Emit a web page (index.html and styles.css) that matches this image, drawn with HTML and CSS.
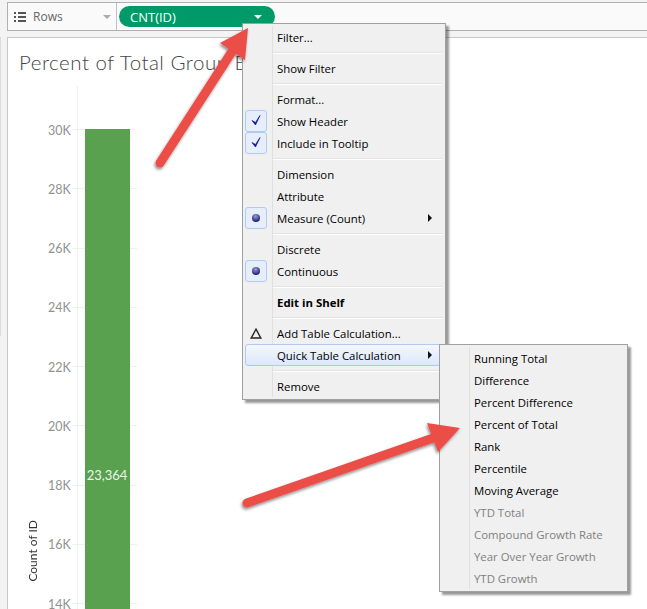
FILE: index.html
```html
<!DOCTYPE html>
<html lang="en">
<head>
    <meta charset="UTF-8">
    <meta name="viewport" content="width=device-width, initial-scale=1.0">
    <title>Percent of Total</title>
    <link rel="stylesheet" href="styles.css">
</head>
<body>

<!-- Rows shelf -->
<div class="shelf">
    <div class="shelf_label">
        <svg class="rows_icon" width="12" height="10" viewBox="0 0 12 10">
            <path d="M0 0h2v2H0zM4 0h8v2H4zM0 4h2v2H0zM4 4h8v2H4zM0 8h2v2H0zM4 8h8v2H4z" fill="#555"/>
        </svg>
        <span class="shelf_name">Rows</span>
        <span class="shelf_caret"></span>
    </div>
    <div class="pill">
        <span>CNT(ID)</span>
        <span class="pill_caret"></span>
    </div>
</div>

<!-- Chart pane -->
<div class="pane">
    <h1 class="title">Percent of Total Group By</h1>
    <div class="chart">
        <div class="axis_title"><span>Count of ID</span></div>
        <div class="plot">
            <div class="tick"><span class="tick_label">30K</span><span class="tick_line"></span></div>
            <div class="tick"><span class="tick_label">28K</span><span class="tick_line"></span></div>
            <div class="tick"><span class="tick_label">26K</span><span class="tick_line"></span></div>
            <div class="tick"><span class="tick_label">24K</span><span class="tick_line"></span></div>
            <div class="tick"><span class="tick_label">22K</span><span class="tick_line"></span></div>
            <div class="tick"><span class="tick_label">20K</span><span class="tick_line"></span></div>
            <div class="tick"><span class="tick_label">18K</span><span class="tick_line"></span></div>
            <div class="tick"><span class="tick_label">16K</span><span class="tick_line"></span></div>
            <div class="tick"><span class="tick_label">14K</span><span class="tick_line"></span></div>
            <div class="axis_line"></div>
            <div class="bar"><span class="bar_value">23,364</span></div>
        </div>
    </div>
</div>

<!-- Context menu -->
<div class="menu main_menu">
    <div class="item"><span class="gutter"></span><span class="label">Filter...</span></div>
    <div class="sep"></div>
    <div class="item"><span class="gutter"></span><span class="label">Show Filter</span></div>
    <div class="sep"></div>
    <div class="item"><span class="gutter"></span><span class="label">Format...</span></div>
    <div class="item">
        <span class="gutter"><span class="mark"><svg width="12" height="12" viewBox="0 0 12 12"><path d="M2 5.500 5.500 10 10 .5 5.500 7.500z" fill="#14148c" stroke="#14148c" stroke-width=".7" stroke-linejoin="round"/></svg></span></span>
        <span class="label">Show Header</span>
    </div>
    <div class="item">
        <span class="gutter"><span class="mark"><svg width="12" height="12" viewBox="0 0 12 12"><path d="M2 5.500 5.500 10 10 .5 5.500 7.500z" fill="#14148c" stroke="#14148c" stroke-width=".7" stroke-linejoin="round"/></svg></span></span>
        <span class="label">Include in Tooltip</span>
    </div>
    <div class="sep"></div>
    <div class="item"><span class="gutter"></span><span class="label">Dimension</span></div>
    <div class="item"><span class="gutter"></span><span class="label">Attribute</span></div>
    <div class="item">
        <span class="gutter"><span class="mark"><span class="dot"></span></span></span>
        <span class="label">Measure (Count)</span>
        <span class="more"></span>
    </div>
    <div class="sep"></div>
    <div class="item"><span class="gutter"></span><span class="label">Discrete</span></div>
    <div class="item">
        <span class="gutter"><span class="mark"><span class="dot"></span></span></span>
        <span class="label">Continuous</span>
    </div>
    <div class="sep"></div>
    <div class="item"><span class="gutter"></span><span class="label bold">Edit in Shelf</span></div>
    <div class="sep"></div>
    <div class="item">
        <span class="gutter"><svg class="delta" width="12" height="11" viewBox="0 0 12 11"><path d="M6 1.200 10.800 10H1.200z" fill="none" stroke="#222" stroke-width="1.400"/></svg></span>
        <span class="label">Add Table Calculation...</span>
    </div>
    <div class="item active">
        <span class="gutter"></span>
        <span class="label">Quick Table Calculation</span>
        <span class="more"></span>
    </div>
    <div class="sep"></div>
    <div class="item"><span class="gutter"></span><span class="label">Remove</span></div>
</div>

<!-- Quick table calculation submenu -->
<div class="menu sub_menu">
    <div class="item"><span class="gutter"></span><span class="label">Running Total</span></div>
    <div class="item"><span class="gutter"></span><span class="label">Difference</span></div>
    <div class="item"><span class="gutter"></span><span class="label">Percent Difference</span></div>
    <div class="item"><span class="gutter"></span><span class="label">Percent of Total</span></div>
    <div class="item"><span class="gutter"></span><span class="label">Rank</span></div>
    <div class="item"><span class="gutter"></span><span class="label">Percentile</span></div>
    <div class="item"><span class="gutter"></span><span class="label">Moving Average</span></div>
    <div class="item disabled"><span class="gutter"></span><span class="label">YTD Total</span></div>
    <div class="item disabled"><span class="gutter"></span><span class="label">Compound Growth Rate</span></div>
    <div class="item disabled"><span class="gutter"></span><span class="label">Year Over Year Growth</span></div>
    <div class="item disabled"><span class="gutter"></span><span class="label">YTD Growth</span></div>
</div>

<!-- Annotation arrows -->
<svg class="arrows" width="647" height="609" viewBox="0 0 647 609">
    <defs>
        <filter id="arrow_shadow" x="-20%" y="-20%" width="140%" height="140%">
            <feDropShadow dx="-1" dy="2" stdDeviation="1.500" flood-color="#000" flood-opacity=".45"/>
        </filter>
    </defs>
    <g filter="url(#arrow_shadow)" fill="#eb4d47" stroke="#eb4d47" stroke-linecap="round">
        <path d="M160 163 233 50" fill="none" stroke-width="9"/>
        <path d="M248 28 220 43 245 60z" stroke="none"/>
        <path d="M247 503 436 437" fill="none" stroke-width="9"/>
        <path d="M460 428 427 423 438 452z" stroke="none"/>
    </g>
</svg>

</body>
</html>
```

FILE: styles.css
```css
html, body {
    margin: 0;
    height: 609px;
    overflow: hidden;
}
body {
    position: relative;
    width: 647px;
    padding: 2px 0 0 7px;
    box-sizing: border-box;
    background-color: #f3f3f3;
    font-family: "Open Sans", sans-serif;
    font-size: 11.400px;
    color: #000;
}
/* sliver of the neighbouring panel at the window edge */
body::before {
    content: "";
    position: absolute;
    left: 0;
    top: 37px;
    width: 1px;
    height: 299px;
    background-color: #dcdcdc;
}

/* shelf */
.shelf {
    display: flex;
    align-items: center;
    height: 29px;
    box-sizing: border-box;
    border: 1px solid #b0b0b0;
    border-right: 0;
    background-color: #fafafa;
}
.shelf_label {
    display: flex;
    align-items: center;
    width: 109px;
    height: 100%;
    padding: 0 5px 0 6px;
    box-sizing: border-box;
    border-right: 1px solid #c0c0c0;
    color: #666;
    font-size: 12px;
}
.shelf_name {
    margin-left: 7px;
    flex: 1;
}
.shelf_caret {
    border-left: 4px solid transparent;
    border-right: 4px solid transparent;
    border-top: 4px solid #aaa;
}
.pill {
    display: flex;
    align-items: center;
    justify-content: space-between;
    width: 156px;
    height: 21px;
    margin-left: 2px;
    padding: 0 13px 0 11px;
    box-sizing: border-box;
    border-radius: 11px;
    background-color: #009a68;
    color: #fff;
    font-size: 13px;
}
.pill_caret {
    border-left: 4px solid transparent;
    border-right: 4px solid transparent;
    border-top: 4px solid #fff;
}

/* chart */
.pane {
    height: 572px;
    margin-top: 6px;
    box-sizing: border-box;
    border: 1px solid #c8c8c8;
    border-width: 1px 0 0 1px;
    background-color: #fff;
    overflow: hidden;
}
.title {
    margin: 0;
    padding: 12px 0 0 11px;
    height: 28px;
    font-family: Lato, sans-serif;
    font-size: 20.500px;
    font-weight: 300;
    line-height: 24px;
    letter-spacing: .5px;
    color: #444;
    white-space: nowrap;
}
.chart {
    display: flex;
    height: 534px;
    margin-top: 8px;
}
.axis_title {
    width: 40px;
    flex: none;
    position: relative;
    color: #333;
}
.axis_title span {
    position: absolute;
    left: 17px;
    top: 434px;
    writing-mode: vertical-rl;
    transform: rotate(180deg);
    font-family: Lato, sans-serif;
    font-size: 12px;
}
.plot {
    position: relative;
    flex: 1;
    padding-top: 14px;
}
.tick {
    display: flex;
    align-items: center;
    height: 59.250px;
}
.tick_label {
    width: 22px;
    margin-top: 2px;
    text-align: right;
    color: #919191;
    font-family: Lato, sans-serif;
    font-size: 12.500px;
    line-height: 10px;
}
.tick_line {
    width: 65px;
    height: 1px;
    margin-left: 2px;
    background-color: #f0f0f0;
}
.axis_line {
    position: absolute;
    left: 29px;
    top: 0;
    bottom: 0;
    width: 1px;
    background-color: #f0f0f0;
}
.bar {
    position: absolute;
    left: 37px;
    top: 43px;
    bottom: 0;
    width: 45px;
    background-color: #59a14f;
    text-align: center;
    color: #fff;
}
.bar_value {
    display: block;
    margin-top: 338px;
    margin-right: 1px;
    font-family: Lato, sans-serif;
    font-size: 13px;
    color: rgba(255, 255, 255, 0.92);
}

/* menus */
.menu {
    position: absolute;
    padding: 2px;
    box-sizing: border-box;
    border: 1px solid #a0a0a0;
    background-color: #f0f0f0;
    box-shadow: 3px 3px 2px rgba(0, 0, 0, 0.4);
}
.main_menu {
    left: 242px;
    top: 23px;
    width: 204px;
}
.sub_menu {
    left: 439px;
    top: 344px;
    width: 189px;
}
.menu::before {
    content: "";
    position: absolute;
    left: 29px;
    top: 2px;
    bottom: 2px;
    border-left: 1px solid #e0e0e0;
}
.item {
    position: relative;
    display: flex;
    align-items: center;
    height: 22px;
    border: 1px solid transparent;
    box-sizing: border-box;
}
.active {
    border-color: #aeccf0;
    border-radius: 3px;
    background: linear-gradient(#f4f7fd, #dce8fa);
}
.gutter {
    display: flex;
    align-items: center;
    width: 24px;
    height: 100%;
    margin-right: 7px;
    flex: none;
}
.mark {
    display: flex;
    align-items: center;
    justify-content: center;
    width: 22px;
    height: 22px;
    margin-left: -1px;
    flex: none;
    box-sizing: border-box;
    border: 1px solid #aeccf0;
    border-radius: 3px;
    background-color: #e6eefb;
}
.delta {
    margin-left: 4px;
}
.dot {
    width: 8px;
    height: 8px;
    margin-top: -1px;
    border-radius: 50%;
    background: radial-gradient(circle at 45% 30%, #9a9ad8, #26267a 70%);
}
.label {
    flex: 1;
    white-space: nowrap;
}
.bold {
    font-weight: 700;
}
.more {
    margin-right: 10px;
    border-top: 4px solid transparent;
    border-bottom: 4px solid transparent;
    border-left: 4px solid #111;
}
.disabled {
    color: #808080;
}
.sep {
    height: 9px;
    margin: 0 1px 0 27px;
    background: linear-gradient(#e2e2e2 50%, #fff 50%) center / 100% 2px no-repeat;
}

.arrows {
    position: absolute;
    left: 0;
    top: 0;
    pointer-events: none;
}
```
